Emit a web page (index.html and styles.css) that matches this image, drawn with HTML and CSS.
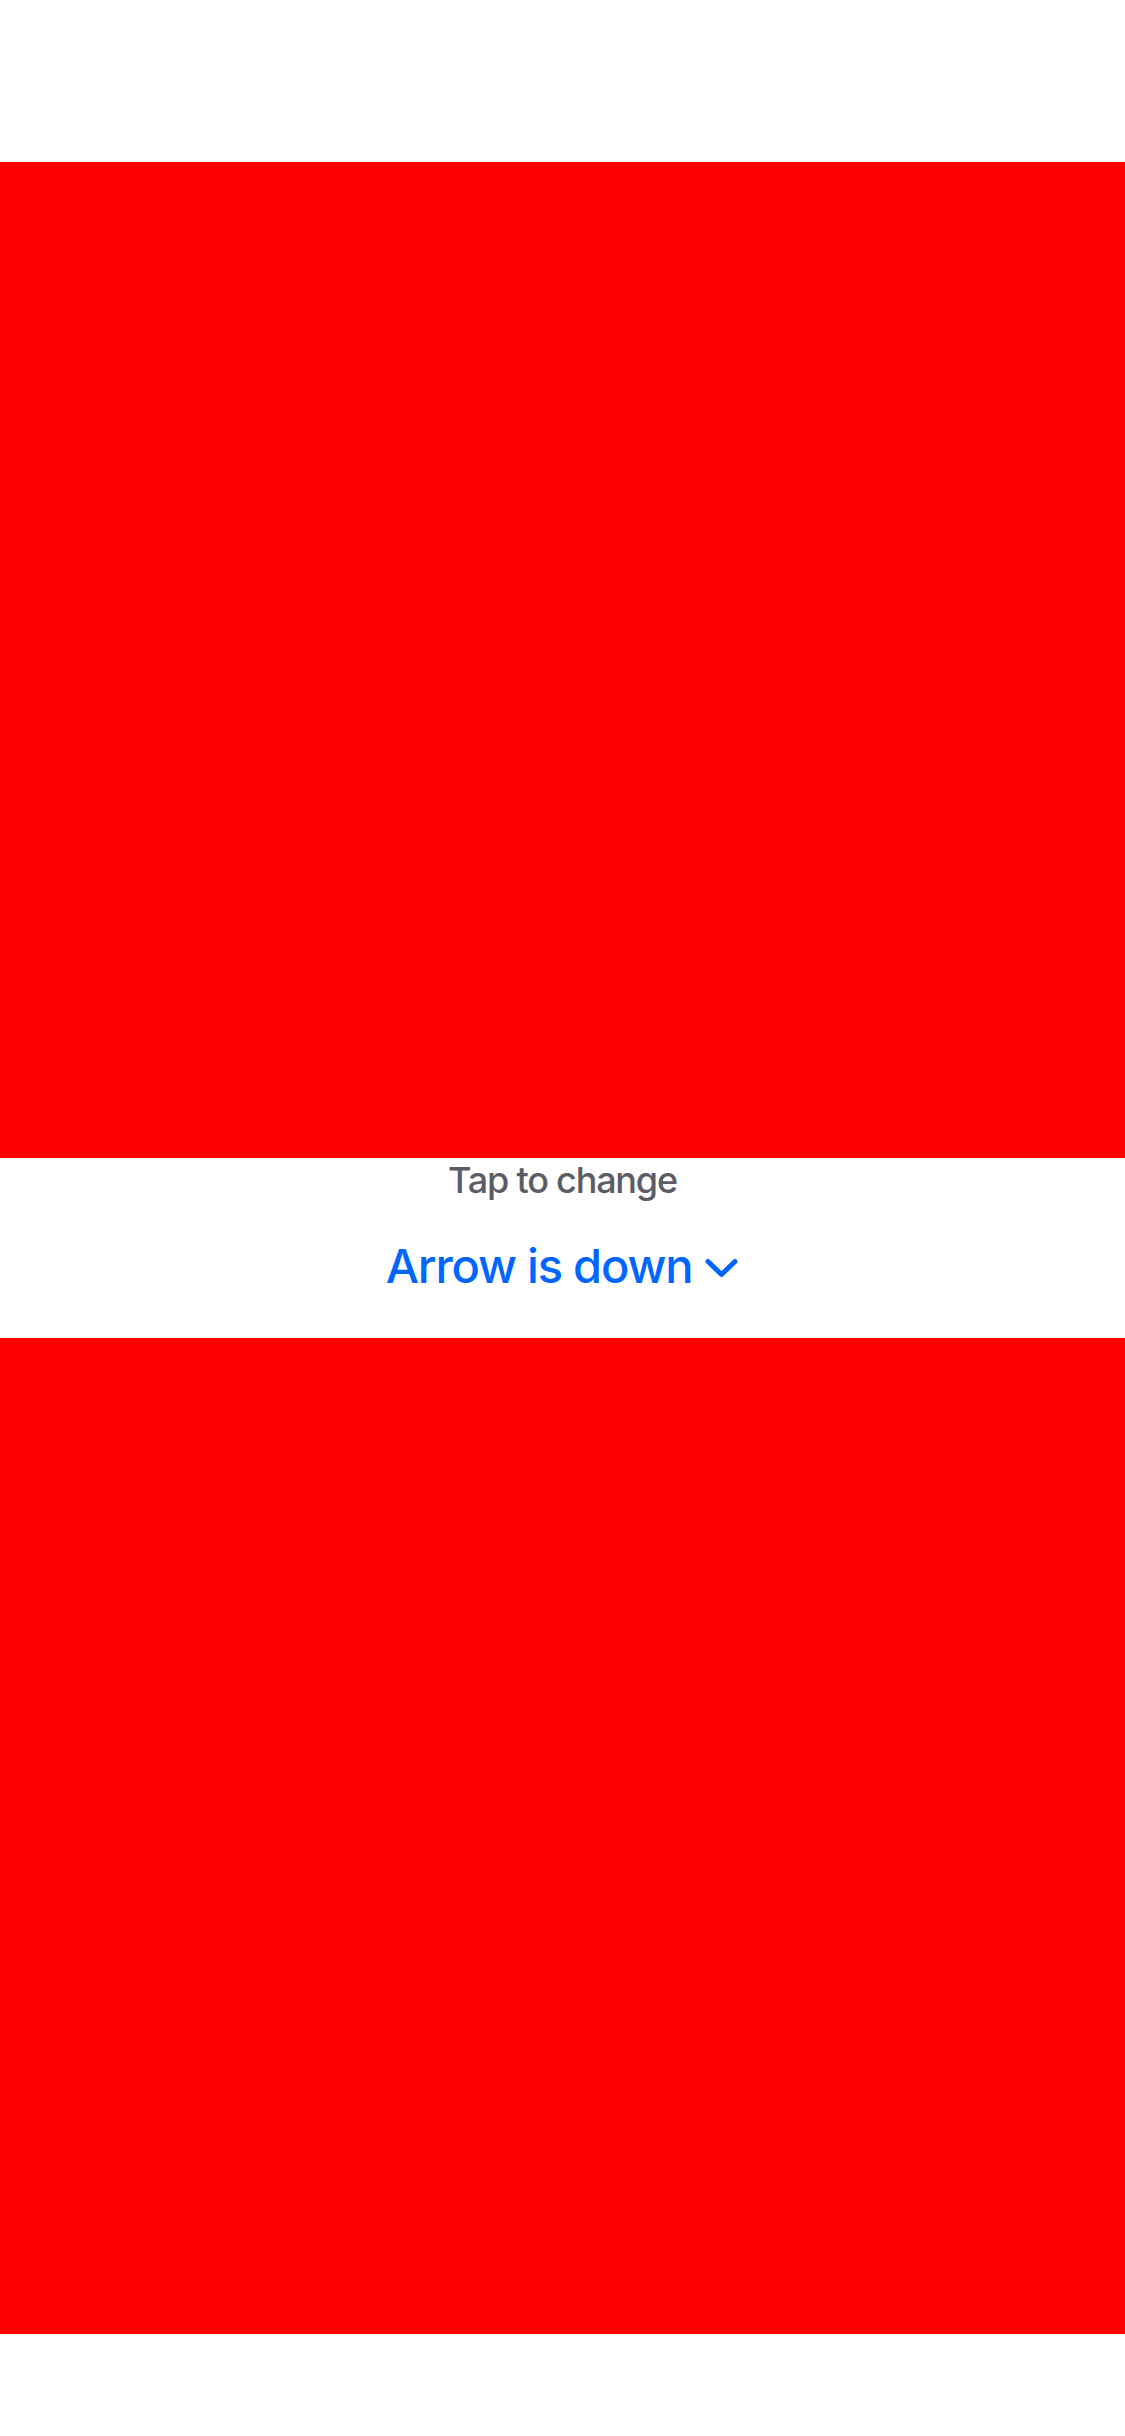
FILE: index.html
```html
<!DOCTYPE html>
<html>
<head>
<meta charset="utf-8">
<link rel="stylesheet" href="styles.css">
</head>
<body>
<div class="page">
  <div class="box"></div>
  <div class="middle">
    <div class="hint">Tap to change</div>
    <div class="toggle">
      <span class="label">Arrow is down</span>
      <svg class="chev" width="35" height="23" viewBox="0 0 35 23"><path d="M4 4.5 L17.5 17.5 L31 4.5" fill="none" stroke="#0066ff" stroke-width="5" stroke-linecap="round" stroke-linejoin="round"/></svg>
    </div>
  </div>
  <div class="box"></div>
</div>
</body>
</html>
```
FILE: styles.css
```css
html, body {
  margin: 0;
  padding: 0;
  background: #ffffff;
}
body {
  font-family: Inter, "Liberation Sans", sans-serif;
}
.page {
  padding-top: 162px;
  height: 2436px;
  box-sizing: border-box;
  display: flex;
  flex-direction: column;
}
.box {
  height: 996px;
  background: #ff0000;
  flex: none;
}
.middle {
  height: 180px;
  flex: none;
  display: flex;
  flex-direction: column;
  align-items: center;
}
.hint {
  font-size: 36px;
  font-weight: 500;
  line-height: 44px;
  color: #5b5c66;
  letter-spacing: -1.2px;
}
.toggle {
  margin-top: 35px;
  display: flex;
  align-items: center;
  gap: 12px;
  color: #0066ff;
}
.label {
  font-size: 47px;
  font-weight: 500;
  line-height: 57px;
  letter-spacing: -1.2px;
}
.chev {
  margin-top: 6px;
}
```
